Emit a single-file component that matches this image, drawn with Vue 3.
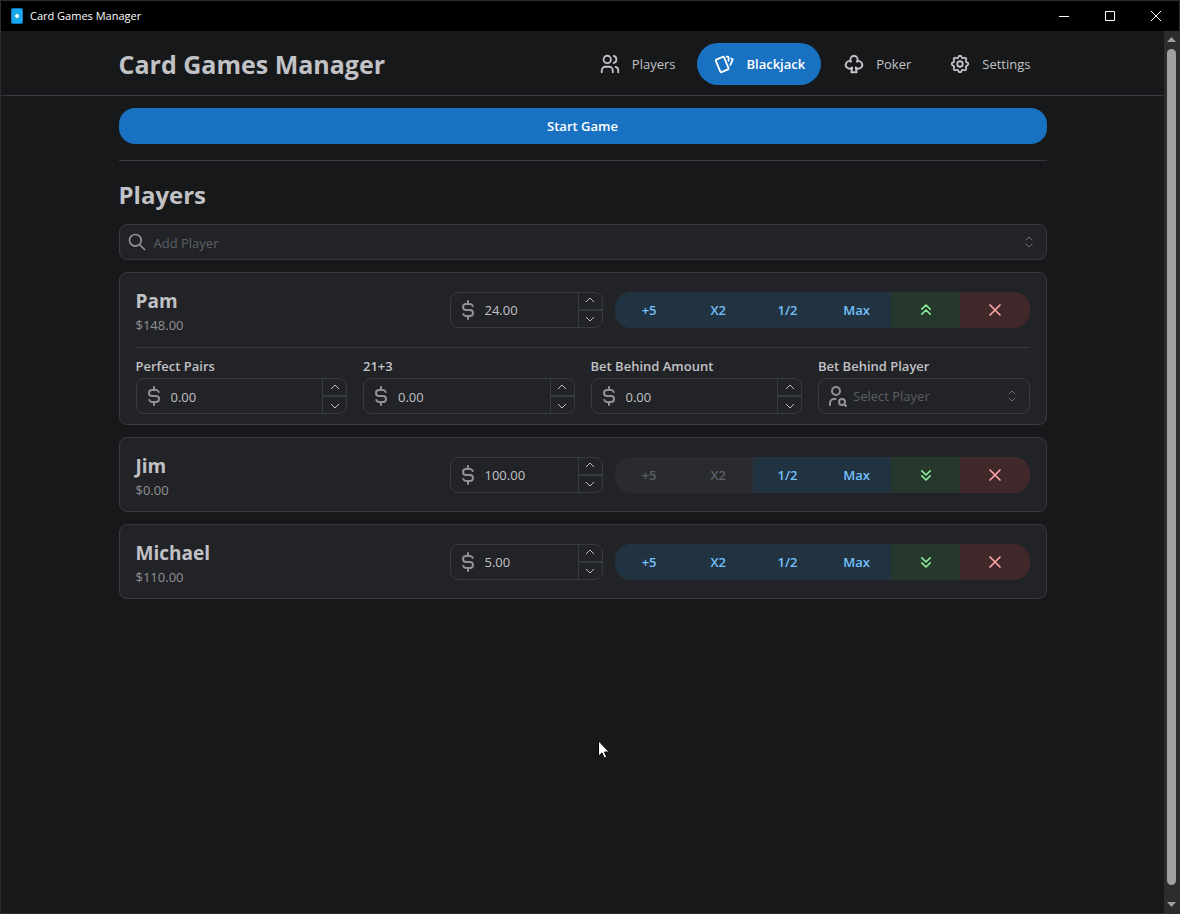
<script setup>
import { ref, reactive } from 'vue'

const icons = {
  users: ['M5 7a4 4 0 1 0 8 0a4 4 0 1 0 -8 0', 'M3 21v-2a4 4 0 0 1 4 -4h4a4 4 0 0 1 4 4v2', 'M16 3.13a4 4 0 0 1 0 7.75', 'M21 21v-2a4 4 0 0 0 -3 -3.85'],
  cards: ['M3.604 7.197l7.138 -3.109a.96 .96 0 0 1 1.27 .527l4.924 11.902a1 1 0 0 1 -.514 1.304l-7.137 3.109a.96 .96 0 0 1 -1.271 -.527l-4.924 -11.903a1 1 0 0 1 .514 -1.304z', 'M15 4h1a1 1 0 0 1 1 1v3.5', 'M20 6c.264 .112 .52 .217 .768 .315a1 1 0 0 1 .53 1.311l-2.298 5.374'],
  clubs: ['M12 3a4 4 0 0 1 3.164 6.447a4 4 0 1 1 -1.164 6.198v1.355l1 4h-6l1 -4v-1.355a4 4 0 1 1 -1.164 -6.199a4 4 0 0 1 3.164 -6.446z'],
  settings: ['M10.325 4.317c.426 -1.756 2.924 -1.756 3.35 0a1.724 1.724 0 0 0 2.573 1.066c1.543 -.94 3.31 .826 2.37 2.37a1.724 1.724 0 0 0 1.065 2.572c1.756 .426 1.756 2.924 0 3.35a1.724 1.724 0 0 0 -1.066 2.573c.94 1.543 -.826 3.31 -2.37 2.37a1.724 1.724 0 0 0 -2.572 1.065c-.426 1.756 -2.924 1.756 -3.35 0a1.724 1.724 0 0 0 -2.573 -1.066c-1.543 .94 -3.31 -.826 -2.37 -2.37a1.724 1.724 0 0 0 -1.065 -2.572c-1.756 -.426 -1.756 -2.924 0 -3.35a1.724 1.724 0 0 0 1.066 -2.573c-.94 -1.543 .826 -3.31 2.37 -2.37c1 .608 2.296 .07 2.572 -1.065z', 'M9 12a3 3 0 1 0 6 0a3 3 0 1 0 -6 0'],
}
const chevronsUp = 'M7 11l5 -5l5 5M7 17l5 -5l5 5'
const chevronsDown = 'M7 7l5 5l5 -5M7 13l5 5l5 -5'
const dollar = 'M16.7 8a3 3 0 0 0 -2.7 -2h-4a3 3 0 0 0 0 6h4a3 3 0 0 1 0 6h-4a3 3 0 0 1 -2.7 -2M12 3v3m0 12v3'

const tabs = [
  { label: 'Players', icon: 'users' },
  { label: 'Blackjack', icon: 'cards' },
  { label: 'Poker', icon: 'clubs' },
  { label: 'Settings', icon: 'settings' },
]
const active = ref('Blackjack')

const players = reactive([
  { name: 'Pam', balance: 148, bet: '24.00', open: true, sides: { 'Perfect Pairs': '0.00', '21+3': '0.00', 'Bet Behind Amount': '0.00' } },
  { name: 'Jim', balance: 0, bet: '100.00', open: false, sides: { 'Perfect Pairs': '0.00', '21+3': '0.00', 'Bet Behind Amount': '0.00' } },
  { name: 'Michael', balance: 110, bet: '5.00', open: false, sides: { 'Perfect Pairs': '0.00', '21+3': '0.00', 'Bet Behind Amount': '0.00' } },
])

function step(target, key, by) {
  target[key] = Math.max(0, Number(target[key]) + by).toFixed(2)
}
function setBet(player, amount) {
  player.balance = player.balance + Number(player.bet) - amount
  player.bet = amount.toFixed(2)
}
function remove(player) {
  players.splice(players.indexOf(player), 1)
}
</script>

<template>
  <div class="window">
    <div class="titlebar">
      <svg class="app-icon" width="12" height="16" viewBox="0 0 12 16" aria-hidden="true">
        <rect width="12" height="16" rx="2" fill="#0b78c2" />
        <rect x="1" y="1" width="10" height="14" rx="1" fill="#19a8ea" />
        <path d="M6 6l2 2l-2 2l-2 -2z" fill="#f4fbff" stroke="#f4fbff" stroke-linejoin="round" />
      </svg>
      <span class="app-name">Card Games Manager</span>
      <button class="win-btn" aria-label="Minimize"><svg width="10" height="10"><path d="M0 5.5h10" /></svg></button>
      <button class="win-btn" aria-label="Maximize"><svg width="10" height="10"><path d="M.5 .5h9v9h-9z" /></svg></button>
      <button class="win-btn" aria-label="Close"><svg width="10" height="10"><path d="M0 0l10 10M10 0l-10 10" /></svg></button>
    </div>

    <div class="body">
      <div class="page">
        <header class="header">
          <div class="container header-row">
            <h1>Card Games Manager</h1>
            <nav class="nav">
              <button
                v-for="tab in tabs"
                :key="tab.label"
                class="tab"
                :class="{ active: tab.label === active }"
                @click="active = tab.label"
              >
                <svg class="icon" width="22" height="22" viewBox="0 0 24 24">
                  <path v-for="d in icons[tab.icon]" :key="d" :d="d" />
                </svg>
                {{ tab.label }}
              </button>
            </nav>
          </div>
        </header>

        <main class="container main">
          <button class="start">Start Game</button>
          <hr class="divider" />
          <h2>Players</h2>

          <div class="field add">
            <span class="lead">
              <svg class="icon" width="20" height="20" viewBox="0 0 24 24"><path d="M3 10a7 7 0 1 0 14 0a7 7 0 1 0 -14 0M21 21l-6 -6" /></svg>
            </span>
            <input type="text" placeholder="Add Player" aria-label="Add Player" />
            <svg class="icon selector" width="12" height="12" viewBox="0 0 24 24"><path d="M6 8l6 -6l6 6M18 16l-6 6l-6 -6" /></svg>
          </div>

          <section v-for="player in players" :key="player.name" class="card">
            <div class="row">
              <div class="who">
                <h3>{{ player.name }}</h3>
                <p>${{ player.balance.toFixed(2) }}</p>
              </div>
              <div class="field bet">
                <span class="lead"><svg class="icon" width="24" height="24" viewBox="0 0 24 24"><path :d="dollar" /></svg></span>
                <input v-model="player.bet" type="text" inputmode="decimal" :aria-label="player.name + ' bet'" />
                <span class="spin">
                  <button aria-label="Increase" @click="step(player, 'bet', 1)"><svg width="10" height="6"><path d="M1 5l4 -4l4 4" /></svg></button>
                  <button aria-label="Decrease" @click="step(player, 'bet', -1)"><svg width="10" height="6"><path d="M1 1l4 4l4 -4" /></svg></button>
                </span>
              </div>
              <div class="group">
                <button :disabled="player.balance < 5" @click="setBet(player, Number(player.bet) + 5)">+5</button>
                <button :disabled="player.balance < Number(player.bet)" @click="setBet(player, Number(player.bet) * 2)">X2</button>
                <button @click="setBet(player, Number(player.bet) / 2)">1/2</button>
                <button @click="setBet(player, Number(player.bet) + player.balance)">Max</button>
                <button class="green" :aria-label="player.open ? 'Hide side bets' : 'Show side bets'" @click="player.open = !player.open">
                  <svg class="icon" width="20" height="20" viewBox="0 0 24 24"><path :d="player.open ? chevronsUp : chevronsDown" /></svg>
                </button>
                <button class="red" aria-label="Remove player" @click="remove(player)">
                  <svg class="icon" width="20" height="20" viewBox="0 0 24 24"><path d="M18 6l-12 12M6 6l12 12" /></svg>
                </button>
              </div>
            </div>

            <div v-if="player.open" class="sides">
              <label v-for="(value, label) in player.sides" :key="label" class="side">
                <span class="label">{{ label }}</span>
                <span class="field">
                  <span class="lead"><svg class="icon" width="24" height="24" viewBox="0 0 24 24"><path :d="dollar" /></svg></span>
                  <input v-model="player.sides[label]" type="text" inputmode="decimal" />
                  <span class="spin">
                    <button aria-label="Increase" @click="step(player.sides, label, 1)"><svg width="10" height="6"><path d="M1 5l4 -4l4 4" /></svg></button>
                    <button aria-label="Decrease" @click="step(player.sides, label, -1)"><svg width="10" height="6"><path d="M1 1l4 4l4 -4" /></svg></button>
                  </span>
                </span>
              </label>
              <label class="side">
                <span class="label">Bet Behind Player</span>
                <span class="field">
                  <span class="lead">
                    <svg class="icon" width="24" height="24" viewBox="0 0 24 24"><path d="M8 7a4 4 0 1 0 8 0a4 4 0 0 0 -8 0M6 21v-2a4 4 0 0 1 4 -4h1.5M15 18a3 3 0 1 0 6 0a3 3 0 1 0 -6 0M20.2 20.2l1.8 1.8" /></svg>
                  </span>
                  <select>
                    <option value="">Select Player</option>
                    <option v-for="other in players.filter((p) => p !== player)" :key="other.name">{{ other.name }}</option>
                  </select>
                  <svg class="icon selector" width="12" height="12" viewBox="0 0 24 24"><path d="M6 8l6 -6l6 6M18 16l-6 6l-6 -6" /></svg>
                </span>
              </label>
            </div>
          </section>
        </main>
      </div>

      <div class="scrollbar" aria-hidden="true">
        <svg width="9" height="5"><path d="M0 5l4.500 -5l4.500 5z" /></svg>
        <div class="thumb"></div>
        <svg width="9" height="5"><path d="M0 0l4.500 5l4.500 -5z" /></svg>
      </div>
    </div>

    <svg class="pointer" width="12" height="19" viewBox="0 0 12 19" aria-hidden="true">
      <path d="M.5 .8v15.400l3.500 -3.300l2.300 5.200l2.400 -1l-2.200 -5.100h4.700z" />
    </svg>
  </div>
</template>

<style>
html,
body {
  background: #17181a;
}
</style>

<style scoped>
* {
  box-sizing: border-box;
}
.window {
  position: relative;
  display: flex;
  flex-direction: column;
  min-height: 100vh;
  border: 1px solid #2b2c2e;
  background: #17181a;
  color: #c1c2c5;
  font: 13px/20px "Open Sans", "Noto Sans", sans-serif;
}
button,
input,
select {
  font: inherit;
  color: inherit;
  margin: 0;
  padding: 0;
  border: 0;
  background: none;
}
.icon {
  display: block;
  flex: none;
  fill: none;
  stroke: currentColor;
  stroke-width: 2;
  stroke-linecap: round;
  stroke-linejoin: round;
}

.titlebar {
  display: flex;
  align-items: center;
  height: 30px;
  padding-left: 10px;
  background: #000;
  color: #fff;
  font-size: 11px;
}
.app-name {
  flex: 1;
  margin-left: 7px;
}
.win-btn {
  display: grid;
  place-items: center;
  width: 46px;
  height: 30px;
}
.win-btn svg {
  fill: none;
  stroke: #fff;
}

.body {
  flex: 1;
  display: flex;
}
.page {
  flex: 1;
  min-width: 0;
}
.container {
  max-width: 960px;
  margin: 0 auto;
  padding: 0 16px;
}
.header {
  border-bottom: 1px solid #373a40;
}
.header-row {
  display: flex;
  align-items: center;
  justify-content: space-between;
  height: 64px;
  padding-top: 2px;
}
h1,
h2,
h3,
p {
  margin: 0;
}
h1 {
  font-size: 25px;
  line-height: 36px;
  font-weight: 700;
}
h2 {
  margin-bottom: 11px;
  font-size: 24px;
  line-height: 36px;
  font-weight: 700;
}
.nav {
  display: flex;
  gap: 6px;
}
.tab {
  display: flex;
  align-items: center;
  gap: 11px;
  height: 42px;
  padding: 0 16px;
  border-radius: 21px;
}
.tab.active {
  background: #1971c2;
  color: #fff;
  font-weight: 600;
}

.main {
  display: flex;
  flex-direction: column;
  padding-top: 12px;
  padding-bottom: 12px;
}
.start {
  height: 36px;
  border-radius: 16px;
  background: #1971c2;
  color: #fff;
  font-weight: 600;
}
.divider {
  width: 100%;
  margin: 16px 0;
  border: 0;
  border-top: 1px solid #373a40;
}

.field {
  position: relative;
  display: flex;
  height: 36px;
  border: 1px solid #373a40;
  border-radius: 8px;
  background: #222327;
}
.lead {
  flex: none;
  display: grid;
  place-items: center;
  width: 34px;
  color: #909296;
}
.field input,
.field select {
  flex: 1;
  min-width: 0;
  width: 0;
  outline: 0;
}
.field input {
  padding-top: 1px;
}
.field select {
  appearance: none;
  color: #5c5f66;
}
.field input::placeholder {
  color: #5c5f66;
  opacity: 1;
}
.selector {
  align-self: center;
  margin-right: 11px;
  color: #6b6d73;
}
.spin {
  flex: none;
  display: flex;
  flex-direction: column;
  width: 24px;
  border-left: 1px solid #373a40;
}
.spin button {
  flex: 1;
  display: grid;
  place-items: center;
}
.spin button:first-child {
  padding-bottom: 1px;
}
.spin button + button {
  padding-top: 1px;
  border-top: 2px solid #373a40;
}
.spin svg {
  fill: none;
  stroke: #c1c2c5;
}

.card {
  margin-top: 12px;
  padding: 10px 16px;
  border: 1px solid #373a40;
  border-radius: 8px;
  background: #222327;
}
.row {
  display: flex;
  align-items: center;
}
.who {
  flex: 1;
  padding-top: 4px;
}
h3 {
  font-size: 19px;
  line-height: 28px;
  font-weight: 700;
}
.who p {
  line-height: 21px;
  color: #909296;
}
.bet {
  width: 153px;
  margin-right: 12px;
}
.group {
  display: flex;
  width: 415px;
  height: 36px;
  border-radius: 16px;
  overflow: hidden;
}
.group button {
  flex: 1;
  display: grid;
  place-items: center;
  background: #213341;
  color: #74c0fc;
  font-weight: 600;
}
.group button:disabled {
  background: #2a2b2f;
  color: #5c5f66;
}
.group .green {
  background: #25382b;
  color: #8ce99a;
}
.group .red {
  background: #41282b;
  color: #ffa8a8;
}
.sides {
  display: grid;
  grid-template-columns: repeat(4, 1fr);
  gap: 16px;
  margin-top: 11px;
  padding-top: 8px;
  border-top: 1px solid #373a40;
}
.side {
  min-width: 0;
}
.label {
  display: block;
  margin-bottom: 2px;
  font-weight: 600;
}

.scrollbar {
  flex: none;
  display: flex;
  flex-direction: column;
  align-items: center;
  gap: 7px;
  width: 15px;
  padding: 6px 0;
  background: #2c2c2c;
}
.scrollbar svg {
  fill: #9f9f9f;
}
.thumb {
  flex: 1;
  width: 9px;
  margin-bottom: 10px;
  border-radius: 5px;
  background: #9f9f9f;
}
.pointer {
  position: absolute;
  left: 597px;
  top: 739px;
  fill: #fff;
  stroke: #000;
}
</style>
